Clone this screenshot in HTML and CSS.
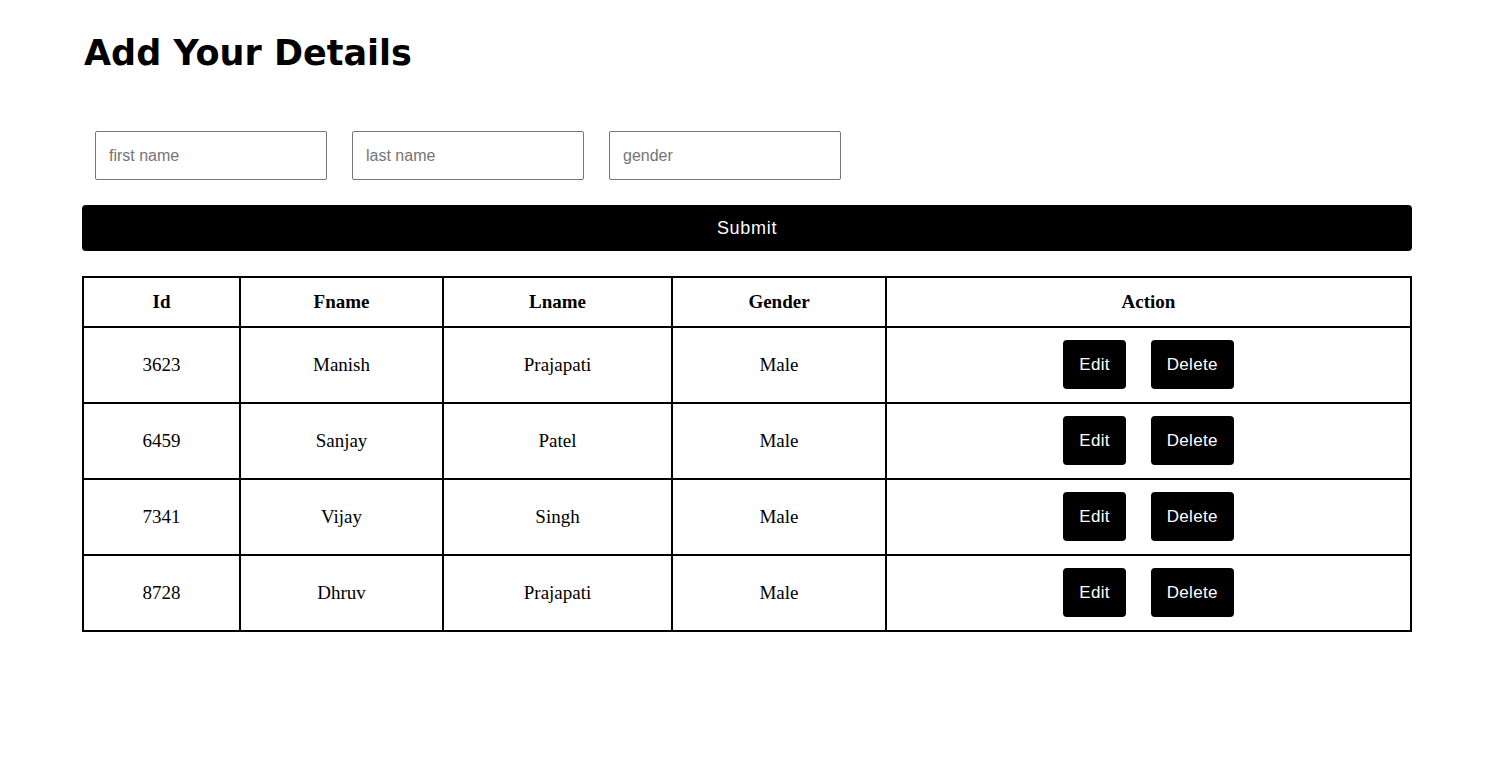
FILE: index.html
```html
<!DOCTYPE html>
<html>
<head>
<meta charset="utf-8">
<link rel="stylesheet" href="styles.css">
</head>
<body>
<div class="page">
  <h1 class="title">Add Your Details</h1>
  <form class="form">
    <div class="fields">
      <input class="field" type="text" placeholder="first name">
      <input class="field" type="text" placeholder="last name">
      <input class="field" type="text" placeholder="gender">
    </div>
    <button class="submit" type="button">Submit</button>
  </form>
  <table class="grid">
    <colgroup>
      <col class="c-id"><col class="c-fn"><col class="c-ln"><col class="c-g"><col class="c-a">
    </colgroup>
    <thead>
      <tr><th>Id</th><th>Fname</th><th>Lname</th><th>Gender</th><th>Action</th></tr>
    </thead>
    <tbody>
      <tr><td>3623</td><td>Manish</td><td>Prajapati</td><td>Male</td><td><div class="actions"><button class="btn">Edit</button><button class="btn">Delete</button></div></td></tr>
      <tr><td>6459</td><td>Sanjay</td><td>Patel</td><td>Male</td><td><div class="actions"><button class="btn">Edit</button><button class="btn">Delete</button></div></td></tr>
      <tr><td>7341</td><td>Vijay</td><td>Singh</td><td>Male</td><td><div class="actions"><button class="btn">Edit</button><button class="btn">Delete</button></div></td></tr>
      <tr><td>8728</td><td>Dhruv</td><td>Prajapati</td><td>Male</td><td><div class="actions"><button class="btn">Edit</button><button class="btn">Delete</button></div></td></tr>
    </tbody>
  </table>
</div>
</body>
</html>
```
FILE: styles.css
```css
html, body {
  margin: 0;
  padding: 0;
  background: #fff;
}
.page {
  width: 1330px;
  margin-left: 82px;
  padding-top: 28px;
  font-family: "Liberation Serif", serif;
}
.title {
  margin: 0;
  font-family: "Comic Sans MS", "DejaVu Sans", sans-serif;
  font-weight: bold;
  font-size: 35px;
  line-height: 50px;
  color: #000;
  padding-left: 2px;
}
.form {
  margin-top: 53px;
}
.fields {
  display: flex;
  gap: 25px;
  padding-left: 13px;
}
.field {
  box-sizing: border-box;
  width: 232px;
  height: 49px;
  border: 1px solid #767676;
  border-radius: 2px;
  padding: 0 13px;
  font-family: "Liberation Sans", Arial, sans-serif;
  font-size: 16px;
  color: #000;
  outline: none;
}
.field::placeholder {
  color: #757575;
}
.submit {
  display: block;
  box-sizing: border-box;
  width: 100%;
  height: 46px;
  margin-top: 25px;
  border: none;
  border-radius: 4px;
  background: #000;
  color: #fff;
  font-family: "Liberation Sans", Arial, sans-serif;
  font-size: 18px;
  letter-spacing: 0.7px;
}
.grid {
  width: 1328px;
  margin-top: 25px;
  border-collapse: collapse;
  border: 2px solid #000;
  table-layout: fixed;
  font-size: 19px;
}
.c-id { width: 157px; }
.c-fn { width: 203px; }
.c-ln { width: 229px; }
.c-g { width: 214px; }
.c-a { width: 525px; }
.grid th, .grid td {
  border: 2px solid #000;
  text-align: center;
  padding: 0;
  color: #000;
}
.grid th {
  height: 48px;
  font-weight: bold;
}
.grid td {
  height: 74px;
}
.actions {
  display: flex;
  justify-content: center;
  gap: 25px;
  padding-bottom: 1px;
}
.btn {
  height: 49px;
  padding: 0 16px;
  border: none;
  border-radius: 4px;
  background: #000;
  color: #fff;
  font-family: "Liberation Sans", Arial, sans-serif;
  font-size: 17px;
  letter-spacing: 0.3px;
}
```
